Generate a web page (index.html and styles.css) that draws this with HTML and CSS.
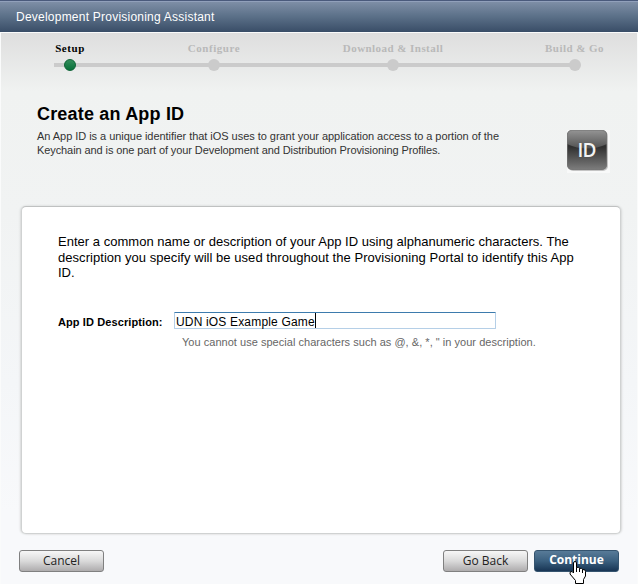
FILE: index.html
```html
<!DOCTYPE html>
<html lang="en">
<head>
<meta charset="utf-8">
<title>Development Provisioning Assistant</title>
<link rel="stylesheet" href="styles.css">
</head>
<body>
<div class="window">
  <header class="titlebar"><span>Development Provisioning Assistant</span></header>
  <main class="content">
    <ol class="steps">
      <li class="step step-setup active"><span>Setup</span><i></i></li>
      <li class="step step-configure"><span>Configure</span><i></i></li>
      <li class="step step-install"><span>Download &amp; Install</span><i></i></li>
      <li class="step step-build"><span>Build &amp; Go</span><i></i></li>
    </ol>
    <section class="intro">
      <div>
        <h1>Create an App ID</h1>
        <p><span class="intro-a">An App ID is a unique identifier that iOS uses to grant your application access to a portion of the</span><br><span class="intro-b">Keychain and is one part of your Development and Distribution Provisioning Profiles.</span></p>
      </div>
      <svg class="badge" width="43" height="43" viewBox="0 0 43 43">
        <defs>
          <linearGradient id="base" x1="0" y1="0" x2="0" y2="1"><stop offset="0" stop-color="#555"/><stop offset=".42" stop-color="#303030"/><stop offset="1" stop-color="#7e7e7e"/></linearGradient>
          <linearGradient id="gloss" x1="0" y1="0" x2="0" y2="1"><stop offset="0" stop-color="#959595"/><stop offset="1" stop-color="#525252"/></linearGradient>
          <clipPath id="tile"><rect width="40" height="40" rx="5"/></clipPath>
        </defs>
        <rect width="43" height="43" fill="#f8f9f9"/>
        <rect x="1" y="1" width="40" height="40" rx="5" fill="#c4c4c4"/>
        <g clip-path="url(#tile)">
          <rect width="40" height="40" fill="url(#base)"/>
          <path d="M0 0H40V14Q20 23 0 14Z" fill="url(#gloss)"/>
        </g>
        <rect x=".5" y=".5" width="39" height="39" rx="4.5" fill="none" stroke="#777" stroke-opacity=".6"/>
        <text x="10.500" y="27">ID</text>
      </svg>
    </section>
    <section class="panel">
      <p class="lead"><span class="lead-a">Enter a common name or description of your App ID using alphanumeric characters. The</span><br><span class="lead-b">description you specify will be used throughout the Provisioning Portal to identify this App</span><br>ID.</p>
      <div class="field">
        <span class="label">App ID Description:</span>
        <div class="input"><span>UDN iOS Example Game</span><i class="caret"></i></div>
      </div>
      <p class="hint">You cannot use special characters such as @, &amp;, *, " in your description.</p>
    </section>
    <footer class="actions">
      <button class="btn cancel">Cancel</button>
      <button class="btn">Go Back</button>
      <button class="btn primary">Continue</button>
    </footer>
  </main>
  <svg class="cursor" width="18" height="23" viewBox="0 0 18 23"><path d="M4.500 2Q4.500 .5 6 .5T7.500 2V6.500Q10 5.500 10.500 7.500Q13 6.500 13.500 8.500Q16.500 8 16.500 10.500V15L14.500 18.500V22.500H6.500V19.500L1 13Q.5 10 3 10.500L4.500 12Z" fill="#fff" stroke="#000"/><path d="M7.500 6.500V11M10.500 7.500V11M13.500 8.500V12" stroke="#000" fill="none"/></svg>
</div>
</body>
</html>
```

FILE: styles.css
```css
* { box-sizing: border-box; }
body {
  margin: 0;
  font-family: "Liberation Sans", Arial, sans-serif;
  color: #000;
}
p, h1, ol { margin: 0; padding: 0; }
.window {
  position: relative;
  width: 638px;
  height: 584px;
  overflow: hidden;
  background: #fafbfb;
}
.titlebar {
  height: 32px;
  padding-left: 16px;
  border-top: 1px solid #4a5a7c;
  box-shadow: inset 0 1px #91a0bb;
  background: linear-gradient(#8090a8, #5b7088 50%, #394d67);
  color: #fff;
  font-size: 12px;
  line-height: 32px;
  letter-spacing: .23px;
}
.content {
  height: 551px;
  margin: 1px 1px 0;
  background: linear-gradient(#dedede 0, #f0f2f1 58px, #f1f3f3 180px, #f4f6f8 350px, #f8f9fb 480px);
}
.steps {
  position: relative;
  display: flex;
  gap: 102px;
  height: 66px;
  padding: 9px 0 0 54px;
  list-style: none;
}
.steps::before {
  content: "";
  position: absolute;
  left: 53px;
  top: 30px;
  width: 523px;
  height: 4px;
  background: #cbcbcb;
}
.step {
  position: relative;
  display: flex;
  flex-direction: column;
  align-items: center;
  color: #b9b9b9;
  font: bold 11px/13px "Liberation Serif", serif;
  letter-spacing: .55px;
  white-space: nowrap;
}
.step i {
  width: 12px;
  height: 12px;
  margin-top: 4px;
  border-radius: 50%;
  background: #cbcbcb;
}
.step.active { color: #000; }
.step.active i {
  border: 1px solid #0b6335;
  background: linear-gradient(#338d5b, #08713a);
}
.step-setup { width: 30px; }
.step-configure { width: 54px; }
.step-install { width: 100px; letter-spacing: .45px; }
.step-build { width: 59px; letter-spacing: .45px; }
.intro {
  display: flex;
  justify-content: space-between;
  height: 107px;
  padding: 4px 27px 0 36px;
}
h1 { font-size: 18px; line-height: 22px; letter-spacing: .18px; }
.intro p {
  margin-top: 4px;
  color: #333;
  font-size: 11px;
  line-height: 14px;
  white-space: nowrap;
}
.intro-a { letter-spacing: -.04px; }
.intro-b { letter-spacing: -.09px; }
.badge { margin-top: 27px; }
.badge text {
  fill: #f2f2f2;
  font: 600 19px "Open Sans", sans-serif;
  letter-spacing: -.8px;
}
.panel {
  width: 600px;
  height: 328px;
  margin-left: 20px;
  padding: 27px 36px;
  border: 1px solid #d0d2d2;
  border-top-color: #bfc1c1;
  border-radius: 5px;
  box-shadow: 1px 0 2px #d8dada, -1px 0 2px #d8dada;
  background: #fff;
}
.lead {
  font-size: 13px;
  line-height: 15.500px;
  white-space: nowrap;
}
.lead-a { letter-spacing: .02px; }
.lead-b { letter-spacing: .045px; }
.field {
  display: flex;
  align-items: center;
  height: 18px;
  margin-top: 31px;
}
.label {
  width: 116px;
  font-size: 11px;
  font-weight: bold;
  line-height: 20px;
  letter-spacing: .1px;
  padding-top: 3px;
  white-space: nowrap;
}
.input {
  display: flex;
  width: 322px;
  height: 17px;
  border: 1px solid #b5cfe7;
  border-top-color: #3d7bad;
  border-radius: 1px;
  padding-left: 1px;
  font-size: 12px;
  line-height: 18px;
  letter-spacing: .17px;
  white-space: nowrap;
}
.caret { width: 1px; height: 15px; background: #000; }
.hint {
  margin: 5px 0 0 124px;
  color: #666;
  font-size: 11px;
  line-height: 14px;
  letter-spacing: .03px;
  white-space: nowrap;
}
.actions {
  display: flex;
  gap: 6px;
  margin: 16px 18px 0;
}
.btn {
  width: 85px;
  height: 22px;
  padding: 0;
  border: 1px solid #808080;
  border-radius: 3px;
  background: linear-gradient(#f7f7f7, #dadada 50%, #aeacad);
  color: #222;
  font: 12px/18px "Open Sans", sans-serif;
}
.cancel { margin-right: auto; }
.primary {
  padding-bottom: 2px;
  border-color: #35546f;
  background: linear-gradient(#587b98, #3b607f 50%, #183554);
  color: #fff;
  font-weight: bold;
}
.cursor { position: absolute; left: 569px; top: 561px; }
```
